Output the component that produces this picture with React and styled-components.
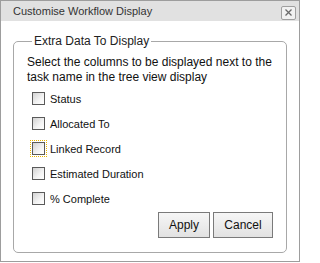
import React from "react";
import styled, { createGlobalStyle } from "styled-components";

const Global = createGlobalStyle`
  html, body { margin: 0; padding: 0; background: #ffffff; }
  * { box-sizing: border-box; }
`;

const Dialog = styled.div`
  width: 300px;
  height: 262px;
  border: 1px solid #9d9d9d;
  background: #ffffff;
  display: flex;
  flex-direction: column;
  font-family: "Liberation Sans", Arial, sans-serif;
  color: #222;
`;

const Header = styled.div`
  height: 20px;
  background: #e1e1e1;
  display: flex;
  align-items: center;
  justify-content: space-between;
  padding: 0 3px 0 12px;
  font-size: 11px;
  color: #333;
`;

const CloseButton = styled.button`
  width: 15px;
  height: 14px;
  margin-top: 3px;
  padding: 0;
  border: 1px solid #a0a0a0;
  border-radius: 2px;
  background: #f2f2f2;
  display: flex;
  align-items: center;
  justify-content: center;
`;

const Body = styled.div`
  flex: 1;
  padding: 13px 12px 8px 12px;
  display: flex;
`;

const Group = styled.fieldset`
  flex: 1;
  margin: 0;
  padding: 7px 13px 10px 13px;
  border: 1px solid #a8a8a8;
  border-radius: 5px;
  display: flex;
  flex-direction: column;
`;

const Legend = styled.legend`
  margin-left: 5px;
  padding: 0 2px;
  font-size: 12px;
  line-height: 14px;
  color: #222;
`;

const Caption = styled.p`
  margin: 0;
  font-size: 12px;
  line-height: 15px;
  color: #111;
`;

const Options = styled.div`
  display: flex;
  flex-direction: column;
  gap: 12px;
  margin-top: 7px;
  padding-left: 5px;
`;

const Option = styled.label`
  display: flex;
  align-items: center;
  gap: 5px;
  height: 13px;
  font-size: 11px;
  color: #111;
`;

const Box = styled.span`
  width: 13px;
  height: 13px;
  border: 1px solid #5a5a5a;
  background: linear-gradient(135deg, #d2d2d2 0%, #f4f4f4 60%, #ffffff 100%);
  outline: ${(p) => (p.$focused ? "1px dotted #e8b400" : "none")};
  outline-offset: 1px;
`;

const Actions = styled.div`
  display: flex;
  justify-content: flex-end;
  gap: 3px;
  margin-top: 7px;
`;

const Button = styled.button`
  width: ${(p) => p.$w}px;
  height: 26px;
  padding: 0;
  border: 1px solid #7a7a7a;
  background: linear-gradient(#f6f6f6, #e2e2e2);
  font-family: "Liberation Sans", Arial, sans-serif;
  font-size: 12px;
  color: #111;
`;

const options = ["Status", "Allocated To", "Linked Record", "Estimated Duration", "% Complete"];

export default function App() {
  return (
    <>
      <Global />
      <Dialog>
        <Header>
          <span>Customise Workflow Display</span>
          <CloseButton aria-label="close">
            <svg width="7" height="7" viewBox="0 0 7 7">
              <path d="M0.5 0.5 L6.5 6.5 M6.5 0.5 L0.5 6.5" stroke="#6a6a6a" strokeWidth="1.3" />
            </svg>
          </CloseButton>
        </Header>
        <Body>
          <Group>
            <Legend>Extra Data To Display</Legend>
            <Caption>
              Select the columns to be displayed next to the task name in the tree view display
            </Caption>
            <Options>
              {options.map((o) => (
                <Option key={o}>
                  <Box $focused={o === "Linked Record"} />
                  {o}
                </Option>
              ))}
            </Options>
            <Actions>
              <Button $w={52}>Apply</Button>
              <Button $w={60}>Cancel</Button>
            </Actions>
          </Group>
        </Body>
      </Dialog>
    </>
  );
}
